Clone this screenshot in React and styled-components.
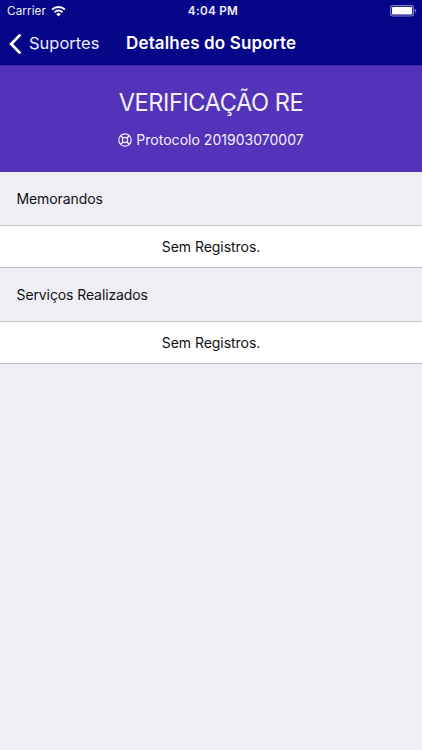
import React, { Component } from 'react';
import styled, { createGlobalStyle } from 'styled-components';

const GlobalStyle = createGlobalStyle`
    * {
        box-sizing: border-box;
    }
    body {
        margin: 0;
        background: #efeef5;
        font-family: Inter, 'Liberation Sans', sans-serif;
    }
`;

const sections = ['Memorandos', 'Serviços Realizados'];

export default class App extends Component {

    render() {
        return (
            <Screen>
                <GlobalStyle />
                <StatusBar>
                    <Carrier>
                        <span>Carrier</span>
                        <WifiIcon />
                    </Carrier>
                    <Clock>4:04 PM</Clock>
                    <BatteryIcon />
                </StatusBar>
                <NavBar>
                    <BackButton>
                        <BackIcon />
                        <BackLabel>Suportes</BackLabel>
                    </BackButton>
                    <NavTitle>Detalhes do Suporte</NavTitle>
                </NavBar>
                <Banner>
                    <BannerTitle>VERIFICAÇÃO RE</BannerTitle>
                    <Protocol>
                        <BuoyIcon />
                        <span>Protocolo 201903070007</span>
                    </Protocol>
                </Banner>
                {sections.map(title => (
                    <section key={title}>
                        <Divider>{title}</Divider>
                        <EmptyRow>Sem Registros.</EmptyRow>
                    </section>
                ))}
            </Screen>
        );
    }
}

const WifiIcon = () => (
    <svg width="15" height="11" viewBox="0 0 15 11" fill="#fff">
        <path d="M7.5 10.4 L5.2 8.1 A3.3 3.3 0 0 1 9.8 8.1 Z" />
        <path d="M3.5 6.2 A5.7 5.7 0 0 1 11.5 6.2" fill="none" stroke="#fff" strokeWidth="1.9" />
        <path d="M1 3.7 A9.2 9.2 0 0 1 14 3.7" fill="none" stroke="#fff" strokeWidth="1.9" />
    </svg>
);

const BatteryIcon = () => (
    <svg width="27" height="12" viewBox="0 0 27 12">
        <rect x="0.6" y="0.6" width="23" height="10.4" rx="2.4" fill="none" stroke="#8080c8" strokeWidth="1.1" />
        <rect x="2" y="2" width="20.2" height="7.6" rx="1" fill="#fff" />
        <path d="M24.9 4 C26.8 4.4 26.8 7.2 24.9 7.6 Z" fill="#8080c8" />
    </svg>
);

const BackIcon = () => (
    <svg width="13" height="22" viewBox="0 0 13 22">
        <path d="M11.3 1.6 L2.2 11 L11.3 20.4" fill="none" stroke="#fff" strokeWidth="2.8" />
    </svg>
);

const BuoyIcon = () => (
    <svg width="14" height="14" viewBox="0 0 14 14" fill="none" stroke="#efeafa">
        <circle cx="7" cy="7" r="6.2" strokeWidth="1.2" />
        <circle cx="7" cy="7" r="2.6" strokeWidth="1.2" />
        <path d="M2.6 2.6 L5.2 5.2 M11.4 2.6 L8.8 5.2 M2.6 11.4 L5.2 8.8 M11.4 11.4 L8.8 8.8" strokeWidth="1.5" />
    </svg>
);

const Screen = styled.main`
    width: 100%;
    min-height: 750px;
    background: #efeef5;
    color: #111;
`;

const StatusBar = styled.header`
    display: grid;
    grid-template-columns: 1fr auto 1fr;
    align-items: center;
    height: 22px;
    padding: 0 5px 0 7px;
    background: #060689;
    color: #f0f0fa;
    > :last-child {
        justify-self: end;
    }
`;

const Carrier = styled.div`
    display: flex;
    align-items: center;
    gap: 5px;
    font-size: 11.7px;
    letter-spacing: 0.1px;
`;

const Clock = styled.div`
    padding-left: 2px;
    font-size: 11.7px;
    font-weight: 600;
    letter-spacing: 0.3px;
`;

const NavBar = styled.nav`
    display: flex;
    align-items: center;
    height: 44px;
    padding: 0 9px;
    background: #060689;
    color: #fff;
    border-bottom: 1px solid #3a26a6;
`;

const BackButton = styled.div`
    display: flex;
    align-items: center;
    gap: 7px;
    width: 117px;
    font-size: 16.5px;
    color: #ececfa;
`;

const BackLabel = styled.span`
    padding-bottom: 2px;
`;

const NavTitle = styled.div`
    padding-bottom: 1px;
    font-size: 17px;
    font-weight: 600;
    letter-spacing: 0.15px;
    white-space: nowrap;
`;

const Banner = styled.div`
    display: flex;
    flex-direction: column;
    align-items: center;
    height: 106px;
    padding-top: 22px;
    background: #5233ba;
    color: #f4f0fc;
`;

const BannerTitle = styled.div`
    font-size: 23.6px;
    font-weight: 400;
    letter-spacing: -0.45px;
    line-height: 29px;
`;

const Protocol = styled.div`
    display: flex;
    align-items: center;
    gap: 4px;
    margin-top: 14px;
    font-size: 14px;
    letter-spacing: 0.02px;
    line-height: 18px;
`;

const Divider = styled.div`
    display: flex;
    align-items: center;
    height: 53px;
    padding-left: 16.5px;
    font-size: 14px;
    letter-spacing: -0.1px;
`;

const EmptyRow = styled.div`
    display: flex;
    align-items: center;
    justify-content: center;
    height: 43px;
    padding-bottom: 1px;
    background: #fff;
    border-top: 1px solid #c3c2c7;
    border-bottom: 1px solid #c3c2c7;
    font-size: 14px;
    letter-spacing: -0.04px;
`;
